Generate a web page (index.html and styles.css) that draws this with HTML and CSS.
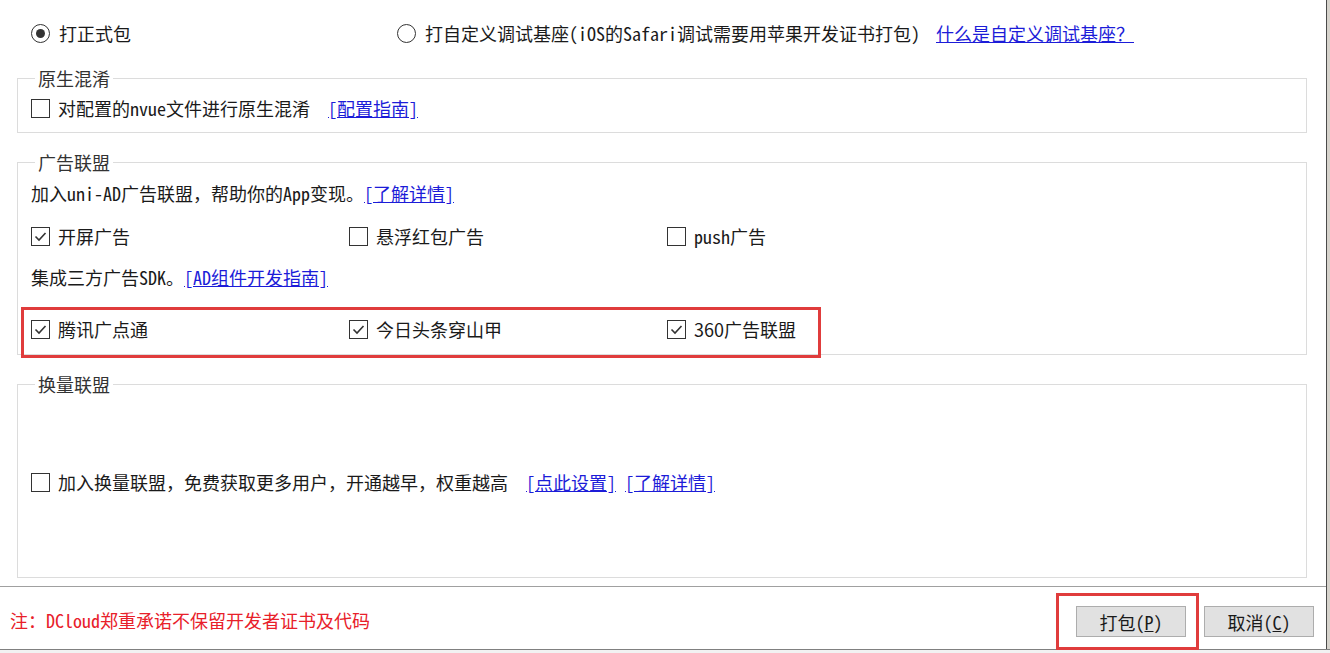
FILE: index.html
```html
<!DOCTYPE html>
<html lang="zh-CN">
<head>
  <meta charset="UTF-8">
  <title>发行 - 原生App云打包</title>
  <link rel="stylesheet" href="styles.css">
</head>
<body>
  <div class="screen">
    <div class="dialog">
      <div class="content">
        <div class="pack-type">
          <label class="option first"><span class="radio on"></span>打正式包</label>
          <label class="option"><span class="radio"></span>打自定义调试基座(iOS的Safari调试需要用苹果开发证书打包)</label>
          <a class="link help" href="#">什么是自定义调试基座？</a>
        </div>

        <fieldset class="group">
          <legend>原生混淆</legend>
          <div class="row">
            <label class="option"><span class="checkbox"></span>对配置的nvue文件进行原生混淆</label>
            <a class="link spaced" href="#">[配置指南]</a>
          </div>
        </fieldset>

        <fieldset class="group ad">
          <legend>广告联盟</legend>
          <div class="row">加入uni-AD广告联盟<span class="fw">，</span>帮助你的App变现。<a class="link" href="#">[了解详情]</a></div>
          <div class="row cols">
            <label class="option"><span class="checkbox"><svg viewBox="0 0 17 17"><polyline points="3.5,8.5 7,12 13.5,5"/></svg></span>开屏广告</label>
            <label class="option"><span class="checkbox"></span>悬浮红包广告</label>
            <label class="option"><span class="checkbox"></span>push广告</label>
          </div>
          <div class="row">集成三方广告SDK。<a class="link" href="#">[AD组件开发指南]</a></div>
          <div class="row cols sdk marked">
            <label class="option"><span class="checkbox"><svg viewBox="0 0 17 17"><polyline points="3.5,8.5 7,12 13.5,5"/></svg></span>腾讯广点通</label>
            <label class="option"><span class="checkbox"><svg viewBox="0 0 17 17"><polyline points="3.5,8.5 7,12 13.5,5"/></svg></span>今日头条穿山甲</label>
            <label class="option"><span class="checkbox"><svg viewBox="0 0 17 17"><polyline points="3.5,8.5 7,12 13.5,5"/></svg></span><span class="fw">360广告联盟</span></label>
          </div>
        </fieldset>

        <fieldset class="group exchange">
          <legend>换量联盟</legend>
          <div class="row">
            <label class="option"><span class="checkbox"></span>加入换量联盟<span class="fw">，</span>免费获取更多用户<span class="fw">，</span>开通越早<span class="fw">，</span>权重越高</label>
            <a class="link spaced" href="#">[点此设置]</a>
            <a class="link near" href="#">[了解详情]</a>
          </div>
        </fieldset>
      </div>

      <div class="footer">
        <div class="note">注：DCloud郑重承诺不保留开发者证书及代码</div>
        <div class="actions">
          <span class="marked-btn"><button>打包(<u>P</u>)</button></span>
          <button>取消(<u>C</u>)</button>
        </div>
      </div>
    </div>
  </div>
  <div class="underlay"></div>
</body>
</html>
```

FILE: styles.css
```css
*, *::before, *::after {
  box-sizing: border-box;
}
html, body {
  margin: 0;
  height: 653px;
  overflow: hidden;
}
body {
  font-family: "Noto Sans CJK SC", sans-serif;
  font-feature-settings: "hwid";
  font-size: 18px;
  color: #1a1a1a;
  background: #d6d3cc;
}
/* proportional / full-width glyphs */
.fw {
  font-feature-settings: normal;
}
.screen {
  display: flex;
  height: 649px;
}
.dialog {
  width: 1327px;
  background: #fff;
  border-right: 1px solid #4a4a4a;
  display: flex;
  flex-direction: column;
}
.content {
  padding: 21px 19px 0 17px;
}
.pack-type {
  display: flex;
  align-items: center;
  height: 24px;
  padding-left: 14px;
}
.option {
  display: inline-flex;
  align-items: center;
  white-space: nowrap;
}
.option.first {
  width: 366px;
}
.radio {
  width: 19px;
  height: 19px;
  border: 1px solid #333;
  border-radius: 50%;
  margin-right: 9px;
  display: inline-flex;
  align-items: center;
  justify-content: center;
}
.radio.on::after {
  content: '';
  width: 9px;
  height: 9px;
  border-radius: 50%;
  background: #333;
}
.checkbox {
  width: 19px;
  height: 19px;
  border: 1px solid #333;
  margin-right: 8px;
  display: inline-flex;
  flex: none;
}
.checkbox svg {
  width: 17px;
  height: 17px;
  fill: none;
  stroke: #333;
  stroke-width: 1.6;
}
.link {
  color: #1c1cd8;
  text-decoration: underline;
  white-space: nowrap;
}
.link.help {
  margin-left: 16px;
}
.link.spaced {
  margin-left: 18px;
}
.link.near {
  margin-left: 9px;
}
.group {
  margin: 23px 0 0;
  border: 1px solid #dcdcdc;
  padding: 8px 0 12px 13px;
  min-width: 0;
}
.group + .group {
  margin-top: 19px;
}
.group legend {
  line-height: 20px;
  padding: 0 3px;
  margin-left: 4px;
  color: #333;
}
.row {
  display: flex;
  align-items: center;
  height: 24px;
  white-space: nowrap;
}
.row.cols {
  display: grid;
  grid-template-columns: repeat(3, 318px);
}
.ad {
  padding-top: 9px;
  padding-bottom: 14px;
}
.ad .row + .row {
  margin-top: 18px;
}
.ad .row.sdk {
  margin-top: 27px;
}
.exchange {
  padding-top: 76px;
  padding-bottom: 83px;
}
.marked {
  position: relative;
}
.marked::after {
  content: '';
  position: absolute;
  left: -10px;
  top: -9px;
  width: 800px;
  height: 51px;
  border: 3px solid #e03c3c;
}
.footer {
  margin-top: 8px;
  flex: 1;
  border-top: 1px solid #a0a0a0;
  display: flex;
  justify-content: space-between;
  align-items: flex-start;
  padding: 19px 12px 0 10px;
}
.note {
  color: #e8202a;
  line-height: 28px;
}
.actions {
  display: flex;
  gap: 18px;
}
button {
  width: 110px;
  height: 31px;
  background: #e1e1e1;
  border: 1px solid #adadad;
  font-family: inherit;
  font-feature-settings: inherit;
  font-size: 18px;
  color: #1a1a1a;
  padding: 0;
}
.marked-btn {
  position: relative;
  display: inline-flex;
}
.marked-btn::after {
  content: '';
  position: absolute;
  left: -20px;
  top: -13px;
  right: -13px;
  bottom: -13px;
  border: 3px solid #e03c3c;
}
.underlay {
  height: 4px;
  border-top: 1px solid #808080;
  background: #f2f2f2;
}
```
